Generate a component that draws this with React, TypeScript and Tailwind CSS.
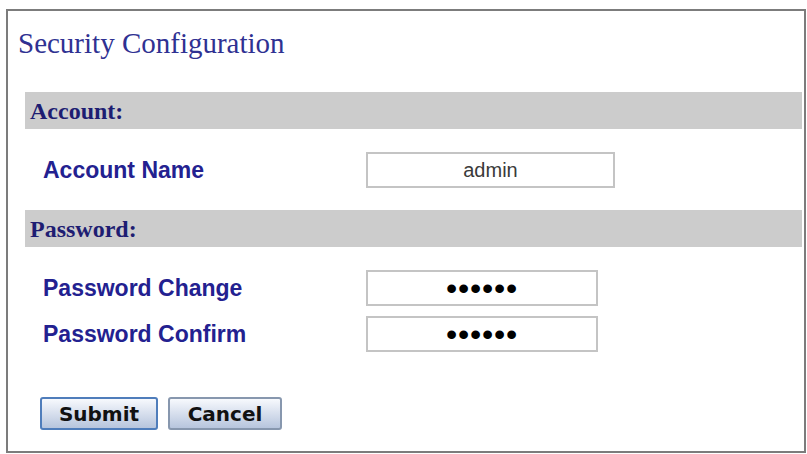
import React from "react";

const serif = { fontFamily: '"Liberation Serif", "Times New Roman", serif' };
const sans = { fontFamily: '"Liberation Sans", Arial, sans-serif' };
const btnFont = { fontFamily: '"DejaVu Sans", Verdana, sans-serif' };

function Bar({ label }: { label: string }) {
  return (
    <div className="ml-[17px] mr-[2px] h-[37px] bg-[#cccccc] flex items-center pl-[5px]">
      <span className="text-[24px] leading-none font-bold text-[#1e1d72]" style={serif}>
        {label}
      </span>
    </div>
  );
}

function Row({
  label,
  value,
  width,
  password,
}: {
  label: string;
  value: string;
  width: string;
  password?: boolean;
}) {
  return (
    <div className="flex items-center h-[36px]">
      <div
        className="ml-[35px] w-[323px] text-[23px] leading-none font-bold text-[#232190]"
        style={sans}
      >
        {label}
      </div>
      <div
        className={`${width} h-[36px] border-2 border-[#c4c4c4] bg-white flex items-center justify-center`}
      >
        {password ? (
          <span className="text-[32px] leading-none text-black tracking-[0.8px]" style={sans}>
            {value}
          </span>
        ) : (
          <span className="text-[20px] leading-none text-[#3a3a3a]" style={sans}>
            {value}
          </span>
        )}
      </div>
    </div>
  );
}

export default function App() {
  return (
    <div className="w-[807px] h-[454px] bg-white pt-[9px] pl-[6px]">
      <div className="w-[800px] h-[444px] border-2 border-[#7c7c7c] flex flex-col">
        <div className="h-[81px] pt-[18px] pl-[10px]">
          <span className="text-[29px] leading-none text-[#2f3192]" style={serif}>
            Security Configuration
          </span>
        </div>
        <Bar label="Account:" />
        <div className="mt-[23px]">
          <Row label="Account Name" value="admin" width="w-[249px]" />
        </div>
        <div className="mt-[22px]">
          <Bar label="Password:" />
        </div>
        <div className="mt-[23px] flex flex-col gap-[10px]">
          <Row label="Password Change" value="••••••" width="w-[232px]" password />
          <Row label="Password Confirm" value="••••••" width="w-[232px]" password />
        </div>
        <div className="mt-[45px] ml-[32px] flex gap-[10px]">
          <button
            className="w-[118px] h-[33px] rounded-[3px] border-2 border-[#4f7dbb] bg-gradient-to-b from-[#f7f9fd] to-[#b7c5dd] text-[20px] font-bold text-[#111] leading-none flex items-center justify-center"
            style={btnFont}
          >
            Submit
          </button>
          <button
            className="w-[114px] h-[33px] rounded-[3px] border-2 border-[#8797ae] bg-gradient-to-b from-[#f7f9fd] to-[#b7c5dd] text-[20px] font-bold text-[#111] leading-none flex items-center justify-center"
            style={btnFont}
          >
            Cancel
          </button>
        </div>
      </div>
    </div>
  );
}
